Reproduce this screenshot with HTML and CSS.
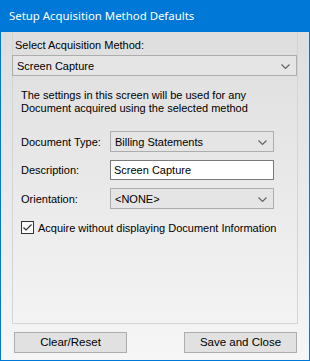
FILE: index.html
```html
<!DOCTYPE html>
<html lang="en">

<head>
    <meta charset="UTF-8">
    <title>Setup Acquisition Method Defaults</title>
    <link rel="stylesheet" href="styles.css">
</head>

<body>

    <div class="window">
        <div class="title-bar">Setup Acquisition Method Defaults</div>

        <div class="client">
            <div class="panel">
                <div class="method-label">Select Acquisition Method:</div>
                <div class="combo combo-wide">
                    <span>Screen Capture</span>
                    <svg class="chevron" width="9" height="5" viewBox="0 0 9 5"><path d="M0.5 0.5 L4.5 4.5 L8.5 0.5" fill="none" stroke="#606060" stroke-width="1.1"/></svg>
                </div>

                <div class="note">
                    The settings in this screen will be used for any<br>
                    Document acquired using the selected method
                </div>

                <div class="fields">
                    <div class="row">
                        <span class="row-label">Document Type:</span>
                        <div class="combo">
                            <span>Billing Statements</span>
                            <svg class="chevron" width="9" height="5" viewBox="0 0 9 5"><path d="M0.5 0.5 L4.5 4.5 L8.5 0.5" fill="none" stroke="#606060" stroke-width="1.1"/></svg>
                        </div>
                    </div>
                    <div class="row">
                        <span class="row-label">Description:</span>
                        <div class="textbox">Screen Capture</div>
                    </div>
                    <div class="row">
                        <span class="row-label">Orientation:</span>
                        <div class="combo">
                            <span>&lt;NONE&gt;</span>
                            <svg class="chevron" width="9" height="5" viewBox="0 0 9 5"><path d="M0.5 0.5 L4.5 4.5 L8.5 0.5" fill="none" stroke="#606060" stroke-width="1.1"/></svg>
                        </div>
                    </div>
                </div>

                <label class="check">
                    <span class="box">
                        <svg width="11" height="11" viewBox="0 0 11 11"><path d="M1.5 5.5 L4 8 L9.5 2.5" fill="none" stroke="#333" stroke-width="1.2"/></svg>
                    </span>
                    Acquire without displaying Document Information
                </label>
            </div>

            <div class="buttons">
                <div class="button">Clear/Reset</div>
                <div class="button">Save and Close</div>
            </div>
        </div>
    </div>

</body>

</html>
```

FILE: styles.css
```css
body {
    margin: 0;
    font-family: "Liberation Sans", Arial, sans-serif;
    font-size: 11px;
    color: #000;
}

.window {
    width: 310px;
    height: 361px;
    box-sizing: border-box;
    border: 1px solid #0078d7;
    border-top: 0;
    display: flex;
    flex-direction: column;
}

.title-bar {
    height: 32px;
    margin: 0 -1px;
    padding-left: 9px;
    background-color: #0078d7;
    color: white;
    font-family: "Noto Sans", sans-serif;
    font-size: 11.4px;
    line-height: 31px;
}

.client {
    flex: 1;
    background: linear-gradient(#dedede, #f6f6f6);
    padding: 0 11px 6px 11px;
    display: flex;
    flex-direction: column;
}

.panel {
    height: 292px;
    box-sizing: border-box;
    border: 1px solid #d4d4d4;
    border-top: 0;
    padding: 7px 0 0 2px;
}

.method-label {
    line-height: 13px;
}

.combo {
    height: 21px;
    box-sizing: border-box;
    border: 1px solid #adadad;
    background-color: #e5e5e5;
    display: flex;
    align-items: center;
    justify-content: space-between;
    padding: 0 6px 0 4px;
}

.combo-wide {
    width: 285px;
    margin: 3px 0 0 -3px;
}

.chevron {
    margin-top: 1px;
}

.note {
    margin: 13px 0 0 6px;
    line-height: 13px;
}

.fields {
    margin: 16px 0 0 6px;
    display: flex;
    flex-direction: column;
    row-gap: 8px;
}

.row {
    display: flex;
    align-items: center;
}

.row-label {
    width: 89px;
}

.row .combo,
.row .textbox {
    width: 164px;
}

.textbox {
    height: 20px;
    box-sizing: border-box;
    border: 1px solid #7a7a7a;
    background-color: white;
    padding-left: 3px;
    line-height: 18px;
}

.check {
    margin: 12px 0 0 6px;
    display: flex;
    align-items: center;
    column-gap: 4px;
}

.check .box {
    width: 13px;
    height: 13px;
    box-sizing: border-box;
    border: 1px solid #333;
    background-color: #fafafa;
    display: flex;
    align-items: center;
    justify-content: center;
}

.buttons {
    margin-top: 8px;
    display: flex;
    justify-content: space-between;
    padding: 0 1px 0 2px;
}

.button {
    width: 113px;
    height: 21px;
    box-sizing: border-box;
    border: 1px solid #adadad;
    background-color: #e1e1e1;
    text-align: center;
    line-height: 19px;
    font-size: 11.5px;
}
```
